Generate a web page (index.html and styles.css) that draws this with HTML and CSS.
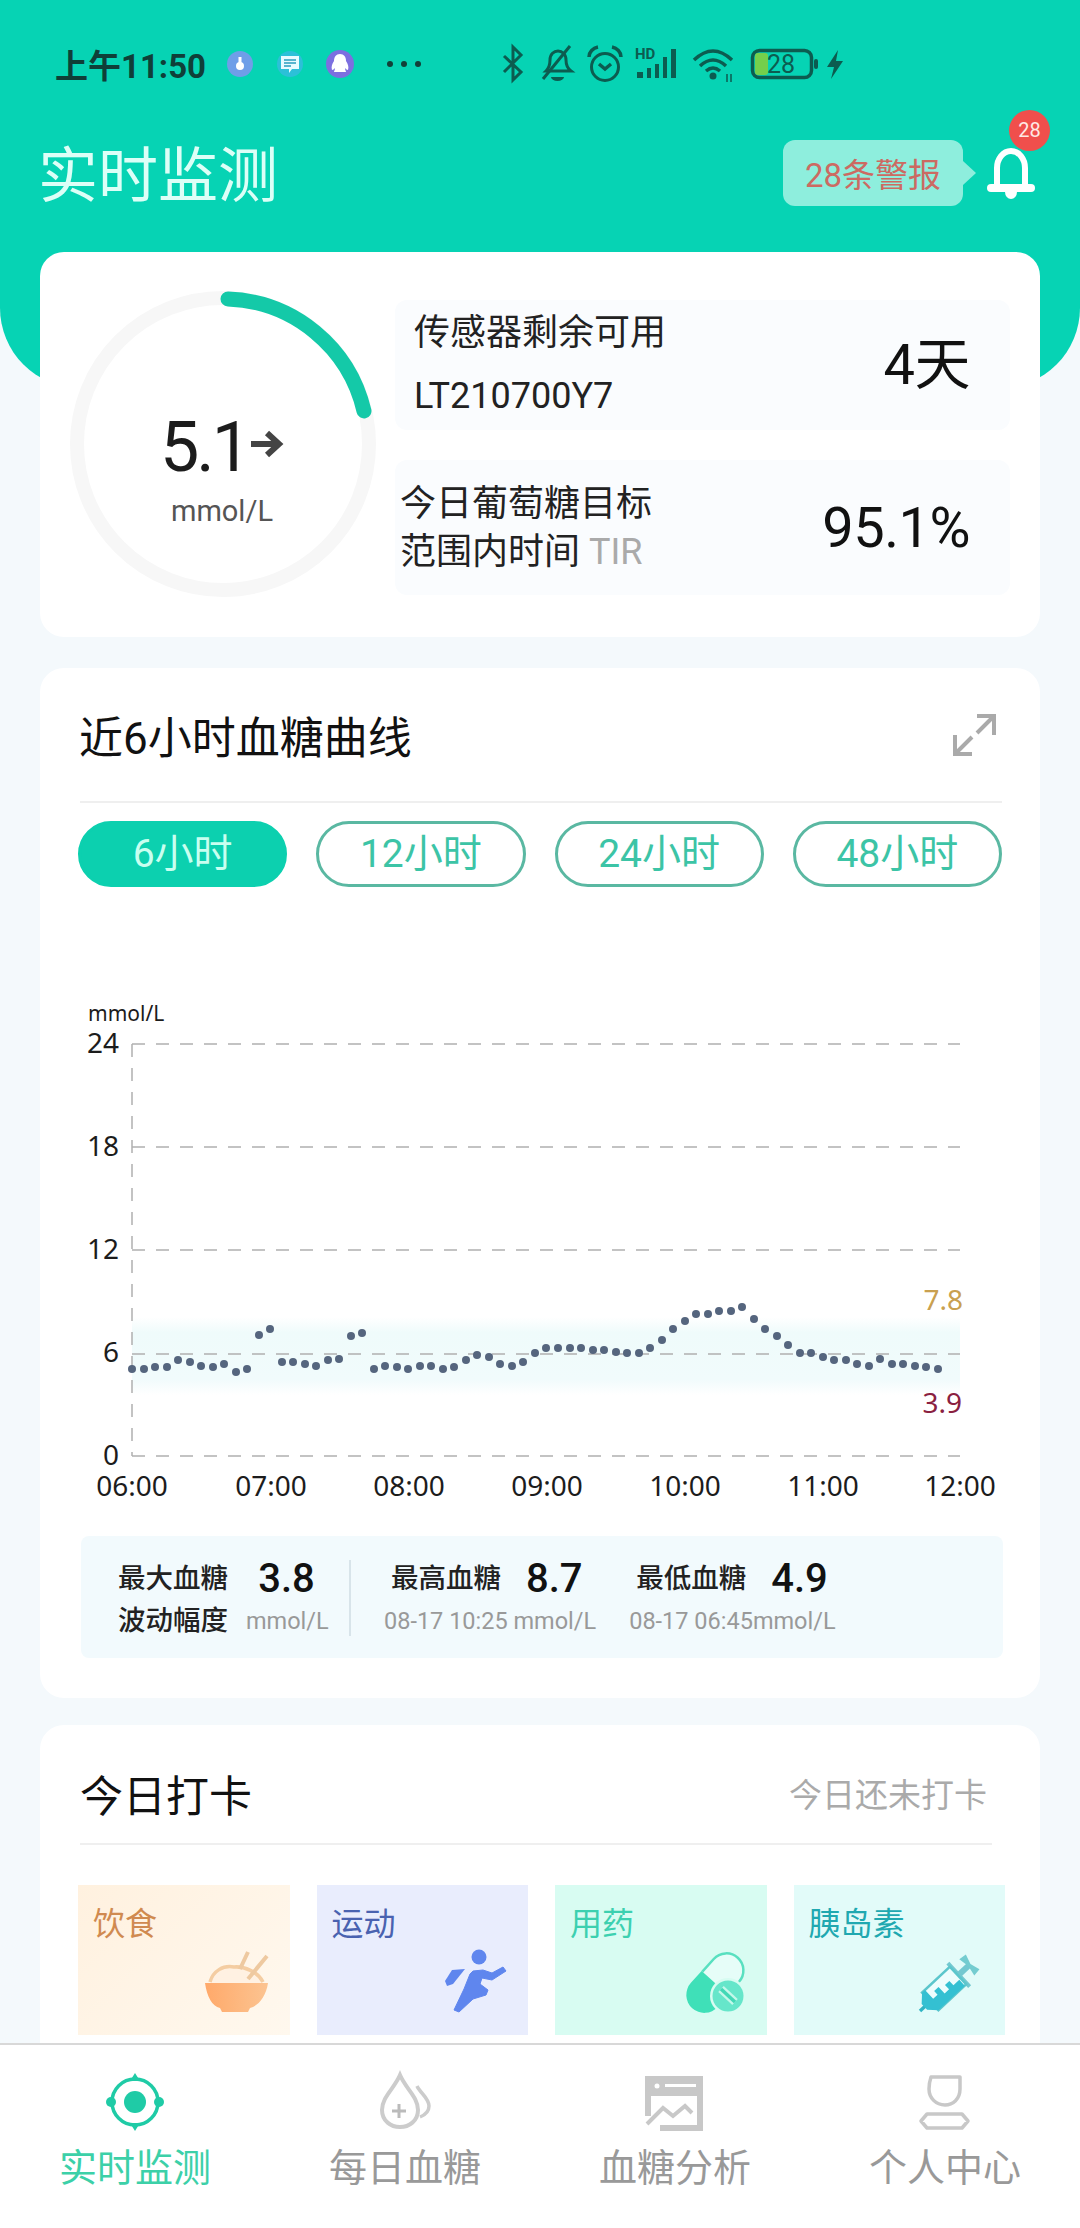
FILE: index.html
```html
<!DOCTYPE html>
<html lang="zh-CN">
  <head>
    <meta charset="UTF-8" />
    <meta name="viewport" content="width=device-width, initial-scale=1.0" />
    <title>实时监测</title>
    <link rel="stylesheet" href="styles.css">
  </head>

  <body>
    <div class="app">
      <main class="main">
        <header class="hero">
          <div class="status">
            <span class="clock">上午11:50</span>
            <svg class="status-apps" viewBox="220 44 204 40">
              <circle cx="240" cy="64" r="13" fill="#6f9ee8" />
              <circle cx="240" cy="66" r="4" fill="#fff" />
              <rect x="238.500" y="57" width="3" height="6" fill="#fff" />
              <circle cx="290" cy="64" r="13" fill="#2cc0d8" />
              <path d="M281 56h18v13h-7l-3 4v-4h-8z" fill="#e8fbff" />
              <path d="M284 60h12M284 63h12M284 66h7" stroke="#2a9fc0" stroke-width="1.500" />
              <circle cx="340" cy="64" r="14" fill="#7c6fe0" />
              <path d="M340 54c4 0 6 3 6 7 2 3 3 6 2 9-1 0-2-1-3-2 0 2 1 3 1 4h-12c0-1 1-2 1-4-1 1-2 2-3 2-1-3 0-6 2-9 0-4 2-7 6-7z" fill="#fff" />
              <circle cx="390" cy="64" r="3" fill="#123f38" />
              <circle cx="404" cy="64" r="3" fill="#123f38" />
              <circle cx="418" cy="64" r="3" fill="#123f38" />
            </svg>
            <svg class="status-sys" viewBox="500 44 346 40">
              <g fill="none" stroke="#0c5c50" stroke-width="3">
                <path d="M504 56l17 16-8 8V47l8 8-17 17" />
                <path d="M546 71c3-3 4-6 4-11 0-6 4-9 8-9s8 3 8 9c0 5 1 8 5 11z" />
                <path d="M570 46l-27 33" />
                <circle cx="605" cy="67" r="13.500" />
                <path d="M589 57c0-5 4-9 9-10M621 57c0-5-4-9-9-10M599 64l6 5 6-5" stroke-width="3.500" />
                <path d="M694 60q19-18 38 0M700 66q13-12 26 0M706 71q7-6 14 0" stroke-width="3.500" />
                <rect x="752.500" y="50.500" width="59" height="27" rx="7" stroke-width="3.500" />
              </g>
              <path d="M551 77h13a6.500 4 0 0 1-13 0z" fill="#0c5c50" />
              <circle cx="713" cy="76" r="3.500" fill="#0c5c50" />
              <path d="M727 74v8M731 74v8" stroke="#0c5c50" stroke-width="1.500" />
              <text class="status-hd" x="635" y="59">HD</text>
              <rect x="637" y="72" width="6" height="6" fill="#0c5c50" />
              <rect x="647" y="68" width="4" height="10" fill="#0c5c50" />
              <rect x="655" y="64" width="4" height="14" fill="#0c5c50" />
              <rect x="663" y="57" width="4" height="21" fill="#0c5c50" />
              <rect x="671" y="49" width="5" height="29" fill="#0c5c50" />
              <rect x="755" y="53" width="13" height="22" rx="3" fill="#74cf4c" />
              <text class="status-batt" x="781" y="73">28</text>
              <rect x="814" y="59" width="4" height="10" rx="2" fill="#0c5c50" />
              <path d="M838 50l-11 17h7l-3 12 12-18h-7z" fill="#0c5c50" />
            </svg>
          </div>

          <div class="hero-row">
            <h1 class="hero-title">实时监测</h1>
            <div class="alert">
              <span class="alert-text">28条警报</span>
              <div class="bell">
                <svg viewBox="0 0 48 56" width="48" height="56">
                  <path d="M10 42V23c0-9 6-17 14-17s14 8 14 17v19" fill="none" stroke="#fff" stroke-width="6" />
                  <rect x="0" y="39" width="48" height="8" rx="4" fill="#fff" />
                  <path d="M18 47h12a6 7 0 0 1-12 0z" fill="#fff" />
                </svg>
                <span class="badge">28</span>
              </div>
            </div>
          </div>
        </header>

        <div class="content">
          <section class="card card-now">
            <div class="ring">
              <svg viewBox="0 0 302 302" width="302" height="302">
                <circle cx="152" cy="150" r="146" fill="none" stroke="#f7f7f7" stroke-width="14" />
                <path d="M157 5A145 145 0 0 1 293 117" fill="none" stroke="#14c9a8" stroke-width="15" stroke-linecap="round" />
              </svg>
              <div class="ring-text">
                <div class="ring-value">
                  <span class="ring-number">5.1</span>
                  <svg viewBox="0 0 34 28" width="34" height="28">
                    <path d="M1 14h27M17 3l12 11-12 11" fill="none" stroke="#444" stroke-width="6" />
                  </svg>
                </div>
                <div class="ring-unit">mmol/L</div>
              </div>
            </div>

            <div class="now-panels">
              <div class="panel panel-sensor">
                <div class="panel-label">
                  <p>传感器剩余可用</p>
                  <p>LT210700Y7</p>
                </div>
                <div class="panel-value">4天</div>
              </div>
              <div class="panel panel-tir">
                <div class="panel-label">
                  <p>今日葡萄糖目标</p>
                  <p>范围内时间 <span class="tir">TIR</span></p>
                </div>
                <div class="panel-value">95.1%</div>
              </div>
            </div>
          </section>

          <section class="card card-curve">
            <div class="card-head head-curve">
              <h2>近6小时血糖曲线</h2>
              <svg viewBox="0 0 42 42" width="42" height="42">
                <path d="M24 2h17v19M39 4L24 19M2 21v19h17M4 38l15-15" fill="none" stroke="#aaa" stroke-width="4" />
              </svg>
            </div>

            <div class="ranges">
              <div class="range active">6小时</div>
              <div class="range">12小时</div>
              <div class="range">24小时</div>
              <div class="range">48小时</div>
            </div>

            <svg class="chart" viewBox="80 1000 920 510" width="920" height="510">
              <defs>
                <linearGradient id="band" x1="0" y1="0" x2="0" y2="1">
                  <stop offset="0" stop-color="#effbfb" stop-opacity="0" />
                  <stop offset="0.2" stop-color="#effbfb" />
                  <stop offset="0.8" stop-color="#f1fbfc" />
                  <stop offset="1" stop-color="#f1fbfc" stop-opacity="0" />
                </linearGradient>
              </defs>
              <rect x="132" y="1316" width="828" height="78" fill="url(#band)" />
              <g stroke="#b0b0b0" stroke-width="1.500" stroke-dasharray="13 11" fill="none">
                <path d="M132 1043H960" />
                <path d="M132 1146H960" />
                <path d="M132 1249H960" />
                <path d="M132 1353H960" />
                <path d="M132 1455H960" />
                <path d="M132 1043V1455" />
              </g>
              <g class="chart-text">
                <text class="chart-unit" x="88" y="1020">mmol/L</text>
                <text x="119" y="1052" text-anchor="end">24</text>
                <text x="119" y="1155" text-anchor="end">18</text>
                <text x="119" y="1258" text-anchor="end">12</text>
                <text x="119" y="1361" text-anchor="end">6</text>
                <text x="119" y="1464" text-anchor="end">0</text>
                <text x="132" y="1495" text-anchor="middle">06:00</text>
                <text x="271" y="1495" text-anchor="middle">07:00</text>
                <text x="409" y="1495" text-anchor="middle">08:00</text>
                <text x="547" y="1495" text-anchor="middle">09:00</text>
                <text x="685" y="1495" text-anchor="middle">10:00</text>
                <text x="823" y="1495" text-anchor="middle">11:00</text>
                <text x="960" y="1495" text-anchor="middle">12:00</text>
                <text class="limit-high" x="963" y="1309" text-anchor="end">7.8</text>
                <text class="limit-low" x="962" y="1412" text-anchor="end">3.9</text>
              </g>
              <g fill="#55657e">
                <circle cx="132" cy="1368" r="4" /><circle cx="144" cy="1368" r="4" /><circle cx="155" cy="1366" r="4" />
                <circle cx="167" cy="1366" r="4" /><circle cx="178" cy="1359" r="4" /><circle cx="190" cy="1361" r="4" />
                <circle cx="201" cy="1365" r="4" /><circle cx="213" cy="1366" r="4" /><circle cx="224" cy="1363" r="4" />
                <circle cx="236" cy="1371" r="4" /><circle cx="247" cy="1368" r="4" /><circle cx="259" cy="1334" r="4" />
                <circle cx="270" cy="1328" r="4" /><circle cx="282" cy="1361" r="4" /><circle cx="293" cy="1361" r="4" />
                <circle cx="305" cy="1363" r="4" /><circle cx="316" cy="1365" r="4" /><circle cx="328" cy="1359" r="4" />
                <circle cx="339" cy="1358" r="4" /><circle cx="351" cy="1335" r="4" /><circle cx="362" cy="1332" r="4" />
                <circle cx="374" cy="1368" r="4" /><circle cx="385" cy="1365" r="4" /><circle cx="397" cy="1366" r="4" />
                <circle cx="408" cy="1368" r="4" /><circle cx="420" cy="1365" r="4" /><circle cx="431" cy="1365" r="4" />
                <circle cx="443" cy="1368" r="4" /><circle cx="454" cy="1366" r="4" /><circle cx="466" cy="1359" r="4" />
                <circle cx="477" cy="1354" r="4" /><circle cx="489" cy="1356" r="4" /><circle cx="500" cy="1363" r="4" />
                <circle cx="512" cy="1365" r="4" /><circle cx="523" cy="1361" r="4" /><circle cx="535" cy="1352" r="4" />
                <circle cx="546" cy="1347" r="4" /><circle cx="558" cy="1347" r="4" /><circle cx="570" cy="1347" r="4" />
                <circle cx="581" cy="1347" r="4" /><circle cx="593" cy="1349" r="4" /><circle cx="604" cy="1349" r="4" />
                <circle cx="616" cy="1351" r="4" /><circle cx="627" cy="1352" r="4" /><circle cx="639" cy="1352" r="4" />
                <circle cx="650" cy="1347" r="4" /><circle cx="662" cy="1339" r="4" /><circle cx="673" cy="1328" r="4" />
                <circle cx="685" cy="1320" r="4" /><circle cx="696" cy="1313" r="4" /><circle cx="708" cy="1313" r="4" />
                <circle cx="719" cy="1310" r="4" /><circle cx="731" cy="1310" r="4" /><circle cx="742" cy="1306" r="4" />
                <circle cx="754" cy="1318" r="4" /><circle cx="765" cy="1328" r="4" /><circle cx="777" cy="1335" r="4" />
                <circle cx="788" cy="1344" r="4" /><circle cx="800" cy="1352" r="4" /><circle cx="811" cy="1352" r="4" />
                <circle cx="823" cy="1356" r="4" /><circle cx="834" cy="1359" r="4" /><circle cx="846" cy="1359" r="4" />
                <circle cx="857" cy="1363" r="4" /><circle cx="869" cy="1365" r="4" /><circle cx="880" cy="1358" r="4" />
                <circle cx="892" cy="1363" r="4" /><circle cx="903" cy="1363" r="4" /><circle cx="915" cy="1365" r="4" />
                <circle cx="926" cy="1366" r="4" /><circle cx="938" cy="1368" r="4" />
              </g>
            </svg>

            <div class="stats">
              <div class="stat-swing">
                <div class="stat-name">最大血糖<br />波动幅度</div>
                <div class="stat-side">
                  <div class="stat-value">3.8</div>
                  <div class="stat-sub">mmol/L</div>
                </div>
              </div>
              <div class="stat-line"></div>
              <div class="stat stat-high">
                <div class="stat-top">
                  <span class="stat-name">最高血糖</span>
                  <span class="stat-value">8.7</span>
                </div>
                <div class="stat-sub">08-17 10:25 mmol/L</div>
              </div>
              <div class="stat stat-low">
                <div class="stat-top">
                  <span class="stat-name">最低血糖</span>
                  <span class="stat-value">4.9</span>
                </div>
                <div class="stat-sub">08-17 06:45mmol/L</div>
              </div>
            </div>
          </section>

          <section class="card card-check">
            <div class="card-head head-check">
              <h2>今日打卡</h2>
              <span class="check-note">今日还未打卡</span>
            </div>

            <div class="tiles">
              <div class="tile tile-food">
                <span>饮食</span>
                <svg viewBox="204 1950 66 66" width="66" height="66">
                  <defs>
                    <linearGradient id="bowl" x1="0" y1="0" x2="1" y2="0">
                      <stop offset="0" stop-color="#ffa96a" />
                      <stop offset="1" stop-color="#fcc491" />
                    </linearGradient>
                  </defs>
                  <path d="M210 1984c3-12 13-18 24-16 10-1 24 5 29 16z" fill="#fff1e2" />
                  <path d="M210 1983c3-11 13-17 24-15 10-1 24 5 29 15" fill="none" stroke="#f4cda2" stroke-width="3.500" />
                  <path d="M248 1953l-8 17M267 1957l-19 23" stroke="#eec9a0" stroke-width="4" />
                  <path d="M205 1984H268C266 1998 258 2007 250 2009L248 2013H222L220 2009C212 2007 207 1998 205 1984Z" fill="url(#bowl)" />
                </svg>
              </div>
              <div class="tile tile-sport">
                <span>运动</span>
                <svg viewBox="444 1950 64 66" width="64" height="66">
                  <circle cx="479" cy="1958" r="7.500" fill="#5f86ee" />
                  <path d="M473 1972L483 1971 492 1974 503 1968 506 1972 492 1981 482 1979 480 1985 488 1991 486 1996 473 2000 459 2013 454 2011 464 1990 470 1975Z" fill="#5f86ee" stroke="#5f86ee" stroke-linejoin="round" />
                  <path d="M452 1971L465 1970 453 1985 447 1987 445 1982Z" fill="#5f86ee" />
                </svg>
              </div>
              <div class="tile tile-drug">
                <span>用药</span>
                <svg viewBox="682 1954 62 62" width="62" height="62">
                  <g transform="translate(712 1984) rotate(42)">
                    <path d="M-17 0V-17A17 17 0 0 1 17-17V0" fill="#e6fdf8" stroke="#58e0c0" stroke-width="2.500" />
                    <path d="M-18 0H18V16A18 18 0 0 1-18 16Z" fill="#3fe0b8" />
                  </g>
                  <circle cx="725" cy="1997" r="18" fill="#d8fcf2" />
                  <circle cx="725" cy="1997" r="15.500" fill="#66e6ca" />
                  <path d="M718 1990l14 13" stroke="#c4f8ea" stroke-width="8" />
                  <path d="M718 1990l14 13" stroke="#42d8b6" stroke-width="3.500" />
                </svg>
              </div>
              <div class="tile tile-insulin">
                <span>胰岛素</span>
                <svg viewBox="919 1950 68 66" width="68" height="66">
                  <g transform="translate(922 2012) rotate(47)">
                    <path d="M0 0V-8" stroke="#30b4c4" stroke-width="3.500" />
                    <rect x="-3" y="-68" width="6" height="16" fill="#74c8d0" />
                    <rect x="-16" y="-55" width="32" height="4" fill="#74c8d0" />
                    <path d="M-10-72L0-69 10-72 11-64 0-66-11-64Z" fill="#74ccd0" />
                    <rect x="-12" y="-52" width="24" height="38" fill="#edfdfd" stroke="#5cc6cc" stroke-width="2.500" />
                    <path d="M12-14V-50H4V-42H-2V-36H4V-30H-5V-24H0V-18H-12V-14L-4-6H4Z" fill="#34c0d2" />
                  </g>
                </svg>
              </div>
            </div>
          </section>
        </div>
      </main>

      <nav class="tabs">
        <div class="tab active">
          <svg viewBox="0 0 58 58" width="58" height="58">
            <circle cx="29" cy="29" r="23" fill="none" stroke="#1fcba6" stroke-width="3.500" />
            <circle cx="29" cy="29" r="11" fill="#1fcba6" />
            <circle cx="5" cy="29" r="5" fill="#1fcba6" />
            <circle cx="53" cy="29" r="5" fill="#1fcba6" />
            <path d="M29 0l5 8h-10zM29 58l5-8h-10z" fill="#1fcba6" />
          </svg>
          <span>实时监测</span>
        </div>
        <div class="tab">
          <svg viewBox="376 2072 58 58" width="58" height="58">
            <path d="M400 2074C394 2088 382 2096 382 2109C382 2120 391 2126 400 2126C409 2126 418 2120 418 2109C418 2096 406 2088 400 2074Z" fill="none" stroke="#ccc" stroke-width="4" />
            <path d="M417 2085C420 2092 429 2097 429 2105C429 2110 425 2114 420 2116" fill="none" stroke="#ccc" stroke-width="3.500" />
            <path d="M399 2103V2117M392 2110H406" stroke="#bbb" stroke-width="3" />
          </svg>
          <span>每日血糖</span>
        </div>
        <div class="tab">
          <svg viewBox="646 2072 58 58" width="58" height="58">
            <path d="M645 2075H703V2095H645Z" fill="#c8c8c8" />
            <rect x="665" y="2083" width="31" height="3" fill="#fff" />
            <circle cx="657" cy="2085" r="2.500" fill="#fff" />
            <path d="M648 2095V2115M700 2095V2127H660" fill="none" stroke="#c8c8c8" stroke-width="6" />
            <path d="M647 2123L663 2107 673 2115 685 2105 692 2112" fill="none" stroke="#c8c8c8" stroke-width="4" />
          </svg>
          <span>血糖分析</span>
        </div>
        <div class="tab">
          <svg viewBox="916 2072 58 58" width="58" height="58">
            <path d="M931 2076H960V2088C960 2098 953 2104 945 2104C936 2104 929 2097 929 2088C929 2083 930 2079 931 2076Z" fill="none" stroke="#c8c8c8" stroke-width="3.500" stroke-linejoin="round" />
            <path d="M927 2113H962L968 2120 962 2127H927L921 2120Z" fill="none" stroke="#c8c8c8" stroke-width="3.500" stroke-linejoin="round" />
          </svg>
          <span>个人中心</span>
        </div>
      </nav>
    </div>
  </body>
</html>
```

FILE: styles.css
```css
* {
  box-sizing: border-box;
}

body {
  margin: 0;
  font-family: Roboto, "Noto Sans CJK SC", sans-serif;
  color: #222;
}

p,
h1,
h2 {
  margin: 0;
  font-weight: 400;
}

svg {
  overflow: visible;
}

.app {
  display: flex;
  flex-direction: column;
  width: 1080px;
  height: 2228px;
  overflow: hidden;
  background-color: #f4f9fc;
}

.main {
  flex: 1;
  min-height: 0;
  overflow: hidden;
}

/* top green part */
.hero {
  height: 388px;
  background-color: #06d3b4;
  border-radius: 0 0 80px 80px;
}

.status {
  display: flex;
  align-items: center;
  height: 128px;
  padding-left: 55px;
}

.clock {
  width: 150px;
  font-size: 33px;
  font-weight: 700;
  color: #0f3f38;
  white-space: nowrap;
}

.status-apps {
  width: 204px;
  height: 40px;
  margin-left: 15px;
}

.status-sys {
  width: 346px;
  height: 40px;
  margin-left: 76px;
}

.status-hd {
  font-size: 15px;
  font-weight: 700;
  fill: #0c5c50;
}

.status-batt {
  font-size: 25px;
  fill: #0c5c50;
  text-anchor: middle;
}

.hero-row {
  display: flex;
  justify-content: space-between;
  align-items: center;
  height: 90px;
  padding: 0 45px 0 38px;
}

.hero-title {
  margin-top: -5px;
  font-size: 60px;
  color: #dcfff7;
}

.alert {
  display: flex;
  align-items: center;
}

.alert-text {
  position: relative;
  display: flex;
  justify-content: center;
  align-items: center;
  width: 180px;
  height: 66px;
  font-size: 33px;
  color: #cc6a62;
  background-color: #8eeedd;
  border-radius: 12px;
}

.alert-text::after {
  content: "";
  position: absolute;
  top: 21px;
  left: 180px;
  border-top: 12px solid transparent;
  border-bottom: 12px solid transparent;
  border-left: 13px solid #8eeedd;
}

.bell {
  position: relative;
  display: flex;
  width: 48px;
  margin-left: 24px;
}

.badge {
  position: absolute;
  top: -35px;
  left: 22px;
  width: 41px;
  height: 41px;
  line-height: 41px;
  font-size: 20px;
  text-align: center;
  color: #ffe8e4;
  background-color: #f04f4c;
  border-radius: 50%;
}

/* cards */
.content {
  display: flex;
  flex-direction: column;
  margin-top: -136px;
  padding: 0 40px;
}

.card {
  background-color: #fff;
  border-radius: 24px;
}

.card-now {
  display: flex;
  height: 385px;
  margin-bottom: 31px;
  padding: 42px 30px 0 31px;
}

.ring {
  display: grid;
  flex: none;
  width: 302px;
  height: 302px;
  margin-right: 22px;
}

.ring > * {
  grid-area: 1 / 1;
}

.ring-text {
  display: flex;
  flex-direction: column;
  align-items: center;
  padding-top: 114px;
}

.ring-value {
  display: flex;
  align-items: center;
  gap: 2px;
  height: 72px;
  font-size: 70px;
  letter-spacing: -3px;
  color: #1c1c1c;
}

.ring-number {
  margin-top: 5px;
}

.ring-unit {
  margin-top: 16px;
  font-size: 29px;
  line-height: 30px;
  color: #555;
}

.now-panels {
  display: flex;
  flex: 1;
  flex-direction: column;
  gap: 30px;
  margin-top: 6px;
}

.panel {
  display: flex;
  justify-content: space-between;
  align-items: center;
  padding-right: 40px;
  font-size: 36px;
  background-color: #fafcfe;
  border-radius: 12px;
}

.panel-sensor {
  height: 130px;
  padding-left: 19px;
  line-height: 63px;
}

.panel-tir {
  height: 135px;
  padding-left: 5px;
  line-height: 48px;
}

.panel-value {
  font-size: 56px;
  letter-spacing: -0.5px;
  color: #111;
}

.tir {
  color: #aaa;
}

.card-curve {
  height: 1030px;
  margin-bottom: 27px;
  padding: 0 38px;
}

.card-head {
  display: flex;
  justify-content: space-between;
  align-items: center;
  margin-left: 2px;
  border-bottom: 2px solid #efefef;
}

.card-head h2 {
  color: #111;
}

.head-curve {
  height: 135px;
  padding: 0 7px 0 0;
}

.head-curve h2 {
  font-size: 44px;
  margin-left: -1px;
}

.ranges {
  display: flex;
  gap: 29px;
  margin-top: 18px;
}

.range {
  flex: 1;
  height: 66px;
  line-height: 60px;
  font-size: 39px;
  text-align: center;
  color: #3cc4a6;
  border: 3px solid #5ab8a2;
  border-radius: 33px;
}

.range.active {
  color: #c8fff0;
  background-color: #0cd0af;
  border-color: #0cd0af;
}

.chart {
  display: block;
  margin: 114px 0 25px 2px;
}

.chart-text {
  font-family: "Noto Sans", sans-serif;
  font-size: 28px;
  fill: #1c1c1c;
}

.chart-text .chart-unit {
  font-size: 21px;
}

.chart-text .limit-high {
  fill: #c9a050;
}

.chart-text .limit-low {
  fill: #8a2040;
}

.stats {
  display: flex;
  height: 122px;
  margin: 0 -1px 0 3px;
  padding: 22px 0 0 37px;
  background-color: #f2fafd;
  border-radius: 8px;
}

.stat-swing {
  display: flex;
  line-height: 42px;
}

.stat-name {
  font-size: 27.500px;
  font-weight: 500;
  color: #222;
}

.stat-side {
  width: 81px;
  margin-left: 18px;
  text-align: center;
}

.stat-value {
  font-size: 40px;
  font-weight: 500;
  color: #111;
}

.stat-sub {
  font-size: 23.500px;
  color: #999;
  white-space: nowrap;
}

.stat-line {
  width: 2px;
  height: 76px;
  margin: 2px 33px 0 22px;
  background-color: #d8e4ea;
}

.stat {
  line-height: 42px;
}

.stat-top {
  display: flex;
  gap: 25px;
  padding-left: 7px;
}

.stat-low {
  margin-left: 33px;
}

.head-check {
  height: 120px;
  padding: 18px 5px 0 0;
  margin-right: 10px;
}

.head-check h2 {
  font-size: 43px;
}

.card-check {
  height: 400px;
  padding: 0 38px;
}

.check-note {
  font-size: 33px;
  color: #aaa;
}

.tiles {
  display: flex;
  gap: 27px;
  margin: 40px -3px 0 0;
}

.tile {
  display: flex;
  flex: 1;
  flex-direction: column;
  justify-content: space-between;
  align-items: flex-start;
  height: 150px;
  padding: 13px 20px 20px 15px;
  font-size: 32px;
}

.tile svg {
  align-self: flex-end;
}

.tile-food {
  color: #d08a50;
  background-image: linear-gradient(135deg, #fff1df, #fff8ee);
}

.tile-sport {
  color: #4a62b0;
  background-color: #e9edfd;
}

.tile-drug {
  color: #3cd0b0;
  background-color: #d8fcf2;
}

.tile-insulin {
  color: #20a8b0;
  background-color: #e2fbf9;
}

/* bottom tabs */
.tabs {
  display: flex;
  flex: none;
  height: 185px;
  background-color: #fff;
  border-top: 2px solid #d8d8d8;
}

.tab {
  display: flex;
  flex: 1;
  flex-direction: column;
  align-items: center;
  padding-top: 28px;
  font-size: 38px;
  line-height: 50px;
  color: #999;
}

.tab svg {
  margin-bottom: 12px;
}

.tab.active {
  color: #3cd0a8;
}
```
